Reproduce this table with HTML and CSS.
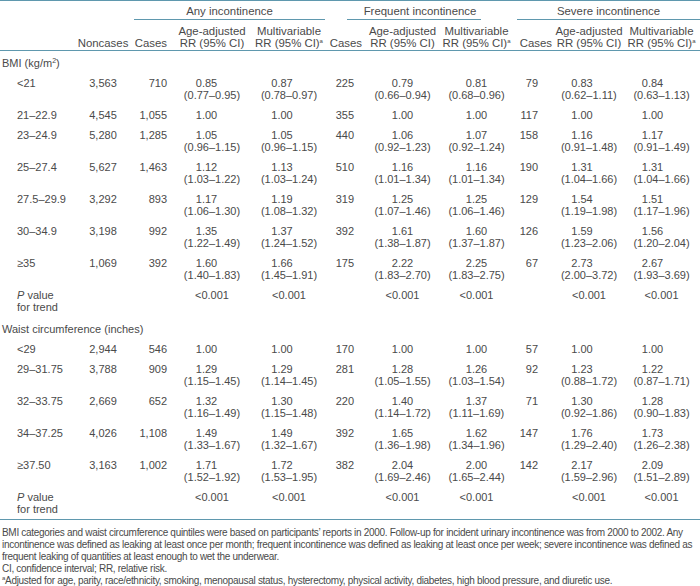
FILE: index.html
```html
<!DOCTYPE html>
<html>
<head>
<meta charset="utf-8">
<link rel="stylesheet" href="styles.css">
</head>
<body>
<div class="page">
<table class="tbl">
<colgroup>
<col class="w-lab"><col class="w-non"><col class="w-c1"><col class="w-a1"><col class="w-m1"><col class="w-c2"><col class="w-a2"><col class="w-m2"><col class="w-c3"><col class="w-a3"><col class="w-m3">
</colgroup>
<thead>
<tr class="grp">
<th></th><th></th>
<th colspan="3"><div class="gline g1">Any incontinence</div></th>
<th colspan="3"><div class="gline g2">Frequent incontinence</div></th>
<th colspan="3"><div class="gline g3">Severe incontinence</div></th>
</tr>
<tr class="sub">
<th></th>
<th class="h-non">Noncases</th>
<th class="h-c1">Cases</th>
<th>Age-adjusted<br>RR (95% CI)</th>
<th>Multivariable<br>RR (95% CI)<sup>a</sup></th>
<th class="h-c2">Cases</th>
<th>Age-adjusted<br>RR (95% CI)</th>
<th>Multivariable<br>RR (95% CI)<sup>a</sup></th>
<th class="h-c3">Cases</th>
<th>Age-adjusted<br>RR (95% CI)</th>
<th>Multivariable<br>RR (95% CI)<sup>a</sup></th>
</tr>
</thead>
<tbody>
<tr class="sec"><td colspan="11">BMI (kg/m<sup class="sq">2</sup>)</td></tr>
<tr><td class="lab">&lt;21</td><td>3,563</td><td>710</td><td><span class="pt">0.85</span><span class="ci">(0.77–0.95)</span></td><td><span class="pt">0.87</span><span class="ci">(0.78–0.97)</span></td><td>225</td><td><span class="pt">0.79</span><span class="ci">(0.66–0.94)</span></td><td><span class="pt">0.81</span><span class="ci">(0.68–0.96)</span></td><td>79</td><td><span class="pt">0.83</span><span class="ci">(0.62–1.11)</span></td><td><span class="pt">0.84</span><span class="ci">(0.63–1.13)</span></td></tr>
<tr><td class="lab">21–22.9</td><td>4,545</td><td>1,055</td><td><span class="pt">1.00</span></td><td><span class="pt">1.00</span></td><td>355</td><td><span class="pt">1.00</span></td><td><span class="pt">1.00</span></td><td>117</td><td><span class="pt">1.00</span></td><td><span class="pt">1.00</span></td></tr>
<tr><td class="lab">23–24.9</td><td>5,280</td><td>1,285</td><td><span class="pt">1.05</span><span class="ci">(0.96–1.15)</span></td><td><span class="pt">1.05</span><span class="ci">(0.96–1.15)</span></td><td>440</td><td><span class="pt">1.06</span><span class="ci">(0.92–1.23)</span></td><td><span class="pt">1.07</span><span class="ci">(0.92–1.24)</span></td><td>158</td><td><span class="pt">1.16</span><span class="ci">(0.91–1.48)</span></td><td><span class="pt">1.17</span><span class="ci">(0.91–1.49)</span></td></tr>
<tr><td class="lab">25–27.4</td><td>5,627</td><td>1,463</td><td><span class="pt">1.12</span><span class="ci">(1.03–1.22)</span></td><td><span class="pt">1.13</span><span class="ci">(1.03–1.24)</span></td><td>510</td><td><span class="pt">1.16</span><span class="ci">(1.01–1.34)</span></td><td><span class="pt">1.16</span><span class="ci">(1.01–1.34)</span></td><td>190</td><td><span class="pt">1.31</span><span class="ci">(1.04–1.66)</span></td><td><span class="pt">1.31</span><span class="ci">(1.04–1.66)</span></td></tr>
<tr><td class="lab">27.5–29.9</td><td>3,292</td><td>893</td><td><span class="pt">1.17</span><span class="ci">(1.06–1.30)</span></td><td><span class="pt">1.19</span><span class="ci">(1.08–1.32)</span></td><td>319</td><td><span class="pt">1.25</span><span class="ci">(1.07–1.46)</span></td><td><span class="pt">1.25</span><span class="ci">(1.06–1.46)</span></td><td>129</td><td><span class="pt">1.54</span><span class="ci">(1.19–1.98)</span></td><td><span class="pt">1.51</span><span class="ci">(1.17–1.96)</span></td></tr>
<tr><td class="lab">30–34.9</td><td>3,198</td><td>992</td><td><span class="pt">1.35</span><span class="ci">(1.22–1.49)</span></td><td><span class="pt">1.37</span><span class="ci">(1.24–1.52)</span></td><td>392</td><td><span class="pt">1.61</span><span class="ci">(1.38–1.87)</span></td><td><span class="pt">1.60</span><span class="ci">(1.37–1.87)</span></td><td>126</td><td><span class="pt">1.59</span><span class="ci">(1.23–2.06)</span></td><td><span class="pt">1.56</span><span class="ci">(1.20–2.04)</span></td></tr>
<tr><td class="lab">≥35</td><td>1,069</td><td>392</td><td><span class="pt">1.60</span><span class="ci">(1.40–1.83)</span></td><td><span class="pt">1.66</span><span class="ci">(1.45–1.91)</span></td><td>175</td><td><span class="pt">2.22</span><span class="ci">(1.83–2.70)</span></td><td><span class="pt">2.25</span><span class="ci">(1.83–2.75)</span></td><td>67</td><td><span class="pt">2.73</span><span class="ci">(2.00–3.72)</span></td><td><span class="pt">2.67</span><span class="ci">(1.93–3.69)</span></td></tr>
<tr><td class="lab"><i>P</i> value<br>for trend</td><td></td><td></td><td>&lt;0.001</td><td>&lt;0.001</td><td></td><td>&lt;0.001</td><td>&lt;0.001</td><td></td><td>&lt;0.001</td><td>&lt;0.001</td></tr>
<tr class="sec"><td colspan="11">Waist circumference (inches)</td></tr>
<tr><td class="lab">&lt;29</td><td>2,944</td><td>546</td><td><span class="pt">1.00</span></td><td><span class="pt">1.00</span></td><td>170</td><td><span class="pt">1.00</span></td><td><span class="pt">1.00</span></td><td>57</td><td><span class="pt">1.00</span></td><td><span class="pt">1.00</span></td></tr>
<tr><td class="lab">29–31.75</td><td>3,788</td><td>909</td><td><span class="pt">1.29</span><span class="ci">(1.15–1.45)</span></td><td><span class="pt">1.29</span><span class="ci">(1.14–1.45)</span></td><td>281</td><td><span class="pt">1.28</span><span class="ci">(1.05–1.55)</span></td><td><span class="pt">1.26</span><span class="ci">(1.03–1.54)</span></td><td>92</td><td><span class="pt">1.23</span><span class="ci">(0.88–1.72)</span></td><td><span class="pt">1.22</span><span class="ci">(0.87–1.71)</span></td></tr>
<tr><td class="lab">32–33.75</td><td>2,669</td><td>652</td><td><span class="pt">1.32</span><span class="ci">(1.16–1.49)</span></td><td><span class="pt">1.30</span><span class="ci">(1.15–1.48)</span></td><td>220</td><td><span class="pt">1.40</span><span class="ci">(1.14–1.72)</span></td><td><span class="pt">1.37</span><span class="ci">(1.11–1.69)</span></td><td>71</td><td><span class="pt">1.30</span><span class="ci">(0.92–1.86)</span></td><td><span class="pt">1.28</span><span class="ci">(0.90–1.83)</span></td></tr>
<tr><td class="lab">34–37.25</td><td>4,026</td><td>1,108</td><td><span class="pt">1.49</span><span class="ci">(1.33–1.67)</span></td><td><span class="pt">1.49</span><span class="ci">(1.32–1.67)</span></td><td>392</td><td><span class="pt">1.65</span><span class="ci">(1.36–1.98)</span></td><td><span class="pt">1.62</span><span class="ci">(1.34–1.96)</span></td><td>147</td><td><span class="pt">1.76</span><span class="ci">(1.29–2.40)</span></td><td><span class="pt">1.73</span><span class="ci">(1.26–2.38)</span></td></tr>
<tr><td class="lab">≥37.50</td><td>3,163</td><td>1,002</td><td><span class="pt">1.71</span><span class="ci">(1.52–1.92)</span></td><td><span class="pt">1.72</span><span class="ci">(1.53–1.95)</span></td><td>382</td><td><span class="pt">2.04</span><span class="ci">(1.69–2.46)</span></td><td><span class="pt">2.00</span><span class="ci">(1.65–2.44)</span></td><td>142</td><td><span class="pt">2.17</span><span class="ci">(1.59–2.96)</span></td><td><span class="pt">2.09</span><span class="ci">(1.51–2.89)</span></td></tr>
<tr><td class="lab"><i>P</i> value<br>for trend</td><td></td><td></td><td>&lt;0.001</td><td>&lt;0.001</td><td></td><td>&lt;0.001</td><td>&lt;0.001</td><td></td><td>&lt;0.001</td><td>&lt;0.001</td></tr>
</tbody>
</table>
<div class="notes">
<p>BMI categories and waist circumference quintiles were based on participants’ reports in 2000. Follow-up for incident urinary incontinence was from 2000 to 2002. Any incontinence was defined as leaking at least once per month; frequent incontinence was defined as leaking at least once per week; severe incontinence was defined as frequent leaking of quantities at least enough to wet the underwear.</p>
<p>CI, confidence interval; RR, relative risk.</p>
<p><sup>a</sup>Adjusted for age, parity, race/ethnicity, smoking, menopausal status, hysterectomy, physical activity, diabetes, high blood pressure, and diuretic use.</p>
</div>
</div>
</body>
</html>
```

FILE: styles.css
```css
html, body {
  margin: 0;
  padding: 0;
  background: #ffffff;
}
.page {
  width: 700px;
  font-family: "Liberation Sans", Arial, sans-serif;
  color: #4a4a4a;
}
.tbl {
  width: 700px;
  border-collapse: collapse;
  table-layout: fixed;
  font-size: 11px;
  line-height: 12px;
  border-top: 1.5px solid #5f98ae;
  border-bottom: 1.5px solid #5f98ae;
}
.w-lab { width: 75px; }
.w-non { width: 56px; }
.w-c1 { width: 41px; }
.w-a1 { width: 80px; }
.w-m1 { width: 74px; }
.w-c2 { width: 38px; }
.w-a2 { width: 77px; }
.w-m2 { width: 71px; }
.w-c3 { width: 43px; }
.w-a3 { width: 68px; }
.w-m3 { width: 77px; }

th {
  font-weight: normal;
  font-size: 11.4px;
  padding: 0;
  white-space: nowrap;
}
sup {
  font-size: 6px;
  line-height: 0;
  vertical-align: 4px;
}
sup.sq {
  font-size: 7px;
}
.grp th {
  padding-top: 4px;
  vertical-align: bottom;
}
.gline {
  text-align: center;
  padding-bottom: 2px;
  border-bottom: 1px solid #5f98ae;
}
.g1 { margin: 0 1px 0 3px; }
.g2 { margin: 0 31px 0 21px; padding-left: 12px; }
.g3 { margin: 0 0 0 5px; }

.sub th {
  vertical-align: bottom;
  text-align: center;
  padding: 5px 0 1px;
  border-bottom: 1.5px solid #5f98ae;
}
.sub th.h-non { text-align: center; }
.sub th.h-c1 { text-align: right; padding-right: 5px; }
.sub th.h-c2 { text-align: right; padding-right: 2px; }
.sub th.h-c3 { text-align: right; padding-right: 3px; }

tbody td {
  padding: 4px 0 4px;
  vertical-align: top;
  text-align: center;
  white-space: nowrap;
}
tbody tr.sec td {
  text-align: left;
  padding-left: 2px;
  padding-top: 6px;
}
tbody td.lab {
  text-align: left;
  padding-left: 17px;
}
tbody td:nth-child(3) { text-align: right; padding-right: 5px; }
tbody td:nth-child(6) { text-align: right; padding-right: 10px; }
tbody td:nth-child(9) { text-align: right; padding-right: 17px; }

.pt, .ci { display: block; }
td:nth-child(4) .pt { padding-right: 11px; }
td:nth-child(5) .pt { padding-right: 14px; }
td:nth-child(10) .pt { padding-right: 14px; }
td:nth-child(11) .pt { padding-right: 18px; }

.notes {
  padding: 7px 2px 0;
  font-size: 10px;
  line-height: 12px;
  letter-spacing: -0.3px;
}
.notes p {
  margin: 0;
}
.notes sup {
  font-size: 6px;
  vertical-align: 4px;
}
```
